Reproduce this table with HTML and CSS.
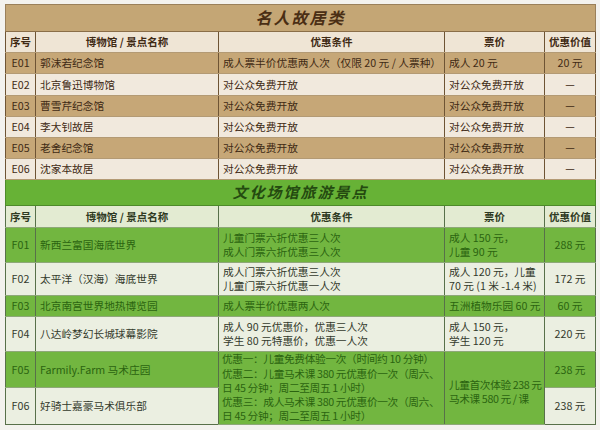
FILE: index.html
```html
<!DOCTYPE html>
<html lang="zh">
<head>
<meta charset="utf-8">
<link rel="stylesheet" href="styles.css">
</head>
<body>
<table class="tbl">
  <colgroup>
    <col class="c1"><col class="c2"><col class="c3"><col class="c4"><col class="c5">
  </colgroup>
  <tbody class="sec-e">
    <tr class="band"><td colspan="5"><span class="title">名人故居类</span></td></tr>
    <tr class="head">
      <th>序号</th><th>博物馆 / 景点名称</th><th>优惠条件</th><th>票价</th><th>优惠价值</th>
    </tr>
    <tr class="dark">
      <td class="id">E01</td><td>郭沫若纪念馆</td><td>成人票半价优惠两人次（仅限 20 元 / 人票种）</td><td>成人 20 元</td><td class="val">20 元</td>
    </tr>
    <tr class="light r22">
      <td class="id">E02</td><td>北京鲁迅博物馆</td><td>对公众免费开放</td><td>对公众免费开放</td><td class="val">—</td>
    </tr>
    <tr class="dark">
      <td class="id">E03</td><td>曹雪芹纪念馆</td><td>对公众免费开放</td><td>对公众免费开放</td><td class="val">—</td>
    </tr>
    <tr class="light">
      <td class="id">E04</td><td>李大钊故居</td><td>对公众免费开放</td><td>对公众免费开放</td><td class="val">—</td>
    </tr>
    <tr class="dark">
      <td class="id">E05</td><td>老舍纪念馆</td><td>对公众免费开放</td><td>对公众免费开放</td><td class="val">—</td>
    </tr>
    <tr class="light">
      <td class="id">E06</td><td>沈家本故居</td><td>对公众免费开放</td><td>对公众免费开放</td><td class="val">—</td>
    </tr>
  </tbody>
  <tbody class="sec-f">
    <tr class="band"><td colspan="5"><span class="title">文化场馆旅游景点</span></td></tr>
    <tr class="head">
      <th>序号</th><th>博物馆 / 景点名称</th><th>优惠条件</th><th>票价</th><th>优惠价值</th>
    </tr>
    <tr class="dark h35">
      <td class="id">F01</td><td>新西兰富国海底世界</td><td>儿童门票六折优惠三人次<br>成人门票六折优惠三人次</td><td>成人 150 元，<br>儿童 90 元</td><td class="val">288 元</td>
    </tr>
    <tr class="light h33">
      <td class="id">F02</td><td>太平洋（汉海）海底世界</td><td>成人门票六折优惠三人次<br>儿童门票六折优惠一人次</td><td>成人 120 元，儿童<br>70 元 (1 米 -1.4 米)</td><td class="val">172 元</td>
    </tr>
    <tr class="dark">
      <td class="id">F03</td><td>北京南宫世界地热博览园</td><td>成人票半价优惠两人次</td><td>五洲植物乐园 60 元</td><td class="val">60 元</td>
    </tr>
    <tr class="light h35">
      <td class="id">F04</td><td>八达岭梦幻长城球幕影院</td><td>成人 90 元优惠价，优惠三人次<br>学生 80 元特惠价，优惠一人次</td><td>成人 150 元，<br>学生 120 元</td><td class="val">220 元</td>
    </tr>
    <tr class="dark h36">
      <td class="id">F05</td><td>Farmily.Farm 马术庄园</td>
      <td rowspan="2" class="multi">优惠一：儿童免费体验一次（时间约 10 分钟）<br>优惠二：儿童马术课 380 元优惠价一次（周六、<br>日 45 分钟；周二至周五 1 小时）<br>优惠三：成人马术课 380 元优惠价一次（周六、<br>日 45 分钟；周二至周五 1 小时）</td>
      <td rowspan="2" class="multi mid">儿童首次体验 238 元<br>马术课 580 元 / 课</td>
      <td class="val">238 元</td>
    </tr>
    <tr class="light h37">
      <td class="id">F06</td><td>好骑士嘉豪马术俱乐部</td><td class="val">238 元</td>
    </tr>
  </tbody>
</table>
</body>
</html>
```

FILE: styles.css
```css
html, body {
  margin: 0;
  padding: 0;
  background: #f3f2ee;
}
body {
  padding: 4px 5px 0 5px;
  font-family: "Noto Sans CJK SC", "Noto Sans", sans-serif;
}
.tbl {
  width: 590px;
  border-collapse: collapse;
  table-layout: fixed;
  font-size: 10.7px;
  line-height: 14px;
}
.c1 { width: 30px; }
.c2 { width: 183px; }
.c3 { width: 226px; }
.c4 { width: 100px; }
.c5 { width: 51px; }

.tbl td, .tbl th {
  padding: 0 3px 0 4px;
  vertical-align: middle;
  white-space: nowrap;
  overflow: hidden;
}
.tbl tr { height: 21px; }
.tbl tr.r22 { height: 22px; }
.tbl tr.h33 { height: 33px; }
.tbl tr.h35 { height: 35px; }
.tbl tr.h36 { height: 36px; }
.tbl tr.h37 { height: 37px; }

.tbl th {
  font-weight: bold;
  font-size: 10.5px;
  text-align: center;
  padding: 0 2px;
}
.id, .val { text-align: center; }
.tbl td.id { padding: 0; }
.tbl td.val { padding: 0 2px; }
.tbl td.multi {
  line-height: 14.3px;
  padding: 0 1px 0 3px;
  letter-spacing: -0.35px;
}
.tbl td.mid {
  padding: 8px 1px 0 4px;
  letter-spacing: -0.4px;
}

.band td {
  text-align: center;
  padding: 0;
}
.title {
  font-style: italic;
  font-weight: bold;
  font-size: 16px;
  letter-spacing: 2px;
}

/* E section: brown */
.sec-e .band { height: 27px; }
.sec-e .band td {
  background: #c4a675;
  border: 1px solid #9a805a;
  border-bottom: 1px solid #8a6e48;
}
.sec-e .title { color: #4a2e14; }
.sec-e .head { height: 21px; }
.sec-e th {
  background: #efe5d5;
  color: #3a2612;
}
.sec-e td, .sec-e th {
  border-left: 1px solid #6e5434;
  border-right: 1px solid #6e5434;
  border-top: 1px solid #b39a74;
  border-bottom: 1px solid #b39a74;
  color: #3f2a14;
}
.sec-e tr.dark td { background: #c6a777; }
.sec-e tr.light td { background: #f1e9dd; }

/* F section: green */
.sec-f .band { height: 26px; }
.sec-f .band td {
  background: #67b236;
  border: 1px solid #4d8a2a;
}
.sec-f .title { color: #244a10; font-size: 15px; }
.sec-f .head { height: 22px; }
.sec-f th {
  background: #e3ebd2;
  color: #2f3a22;
}
.sec-f td, .sec-f th {
  border-left: 1px solid #58704a;
  border-right: 1px solid #58704a;
  border-top: 1px solid #8ea878;
  border-bottom: 1px solid #8ea878;
}
.sec-f tr.dark td { background: #72b640; color: #2b6410; }
.sec-f tr.light td { background: #ebefe1; color: #333a2c; }
.sec-f tr:last-child td { border-bottom: 1px solid #58704a; }
```
